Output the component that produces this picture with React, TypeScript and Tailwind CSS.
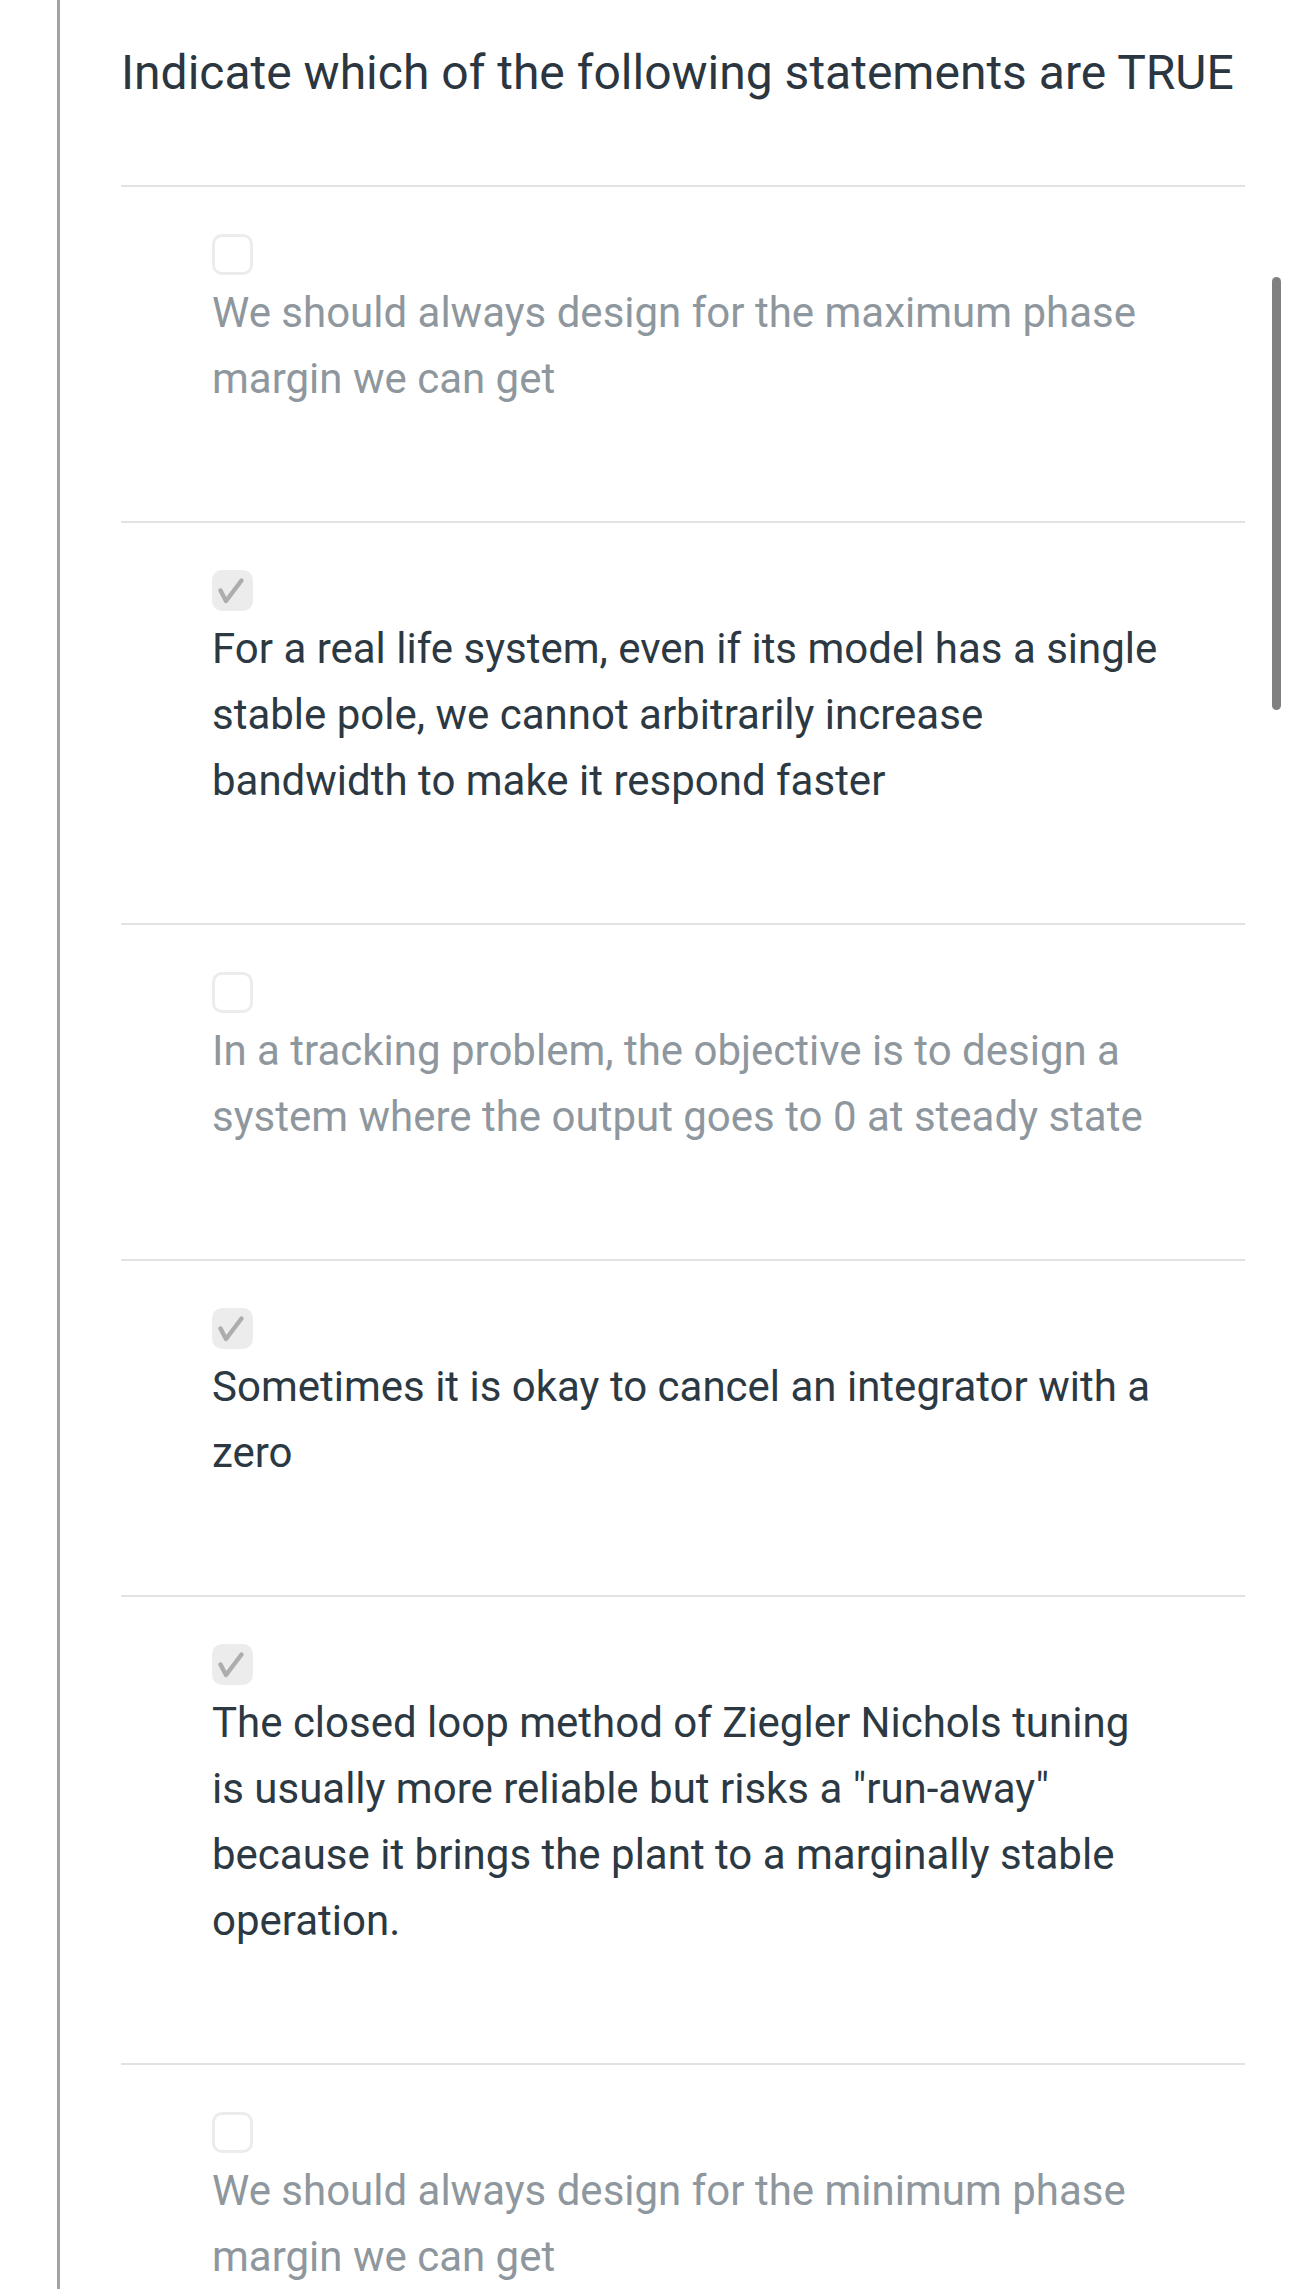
type Item = { text: string; checked: boolean };

const items: Item[] = [
  { text: 'We should always design for the maximum phase margin we can get', checked: false },
  {
    text: 'For a real life system, even if its model has a single stable pole, we cannot arbitrarily increase bandwidth to make it respond faster',
    checked: true,
  },
  {
    text: 'In a tracking problem, the objective is to design a system where the output goes to 0 at steady state',
    checked: false,
  },
  { text: 'Sometimes it is okay to cancel an integrator with a zero', checked: true },
  {
    text: 'The closed loop method of Ziegler Nichols tuning is usually more reliable but risks a "run-away" because it brings the plant to a marginally stable operation.',
    checked: true,
  },
  { text: 'We should always design for the minimum phase margin we can get', checked: false },
];

function Option({ item }: { item: Item }) {
  return (
    <div className="border-t-2 border-[#e2e2e2] pt-[47px] pb-[109px] pl-[91px]">
      {item.checked ? (
        <div className="h-[41px] w-[41px] rounded-[10px] bg-[#ececec]">
          <svg width="41" height="41" viewBox="0 0 41 41" fill="none">
            <path
              d="M8.5 20.5 L14 31 L29.5 10.5"
              stroke="#adadaf"
              strokeWidth="4.4"
              strokeLinecap="round"
              strokeLinejoin="round"
            />
          </svg>
        </div>
      ) : (
        <div className="h-[41px] w-[41px] rounded-[10px] border-[3px] border-[#ececec] bg-white" />
      )}
      <p
        className={
          'mt-[5px] w-[948px] text-[42px] leading-[66px] ' +
          (item.checked ? 'text-[#2c3943]' : 'text-[#8f979e]')
        }
      >
        {item.text}
      </p>
    </div>
  );
}

export default function App() {
  return (
    <div className="relative h-[2289px] w-[1290px] overflow-hidden bg-white font-['Roboto',sans-serif]">
      <div className="ml-[57px] h-full border-l-[3px] border-[#a2a2a2] pl-[61px]">
        <div className="w-[1124px]">
          <h1 className="pt-[45px] pb-[84px] text-[48px] leading-[56px] text-[#2b3640]">
            Indicate which of the following statements are TRUE
          </h1>
          {items.map((item, i) => (
            <Option key={i} item={item} />
          ))}
        </div>
      </div>
      <div className="absolute right-[9px] top-[277px] h-[433px] w-[9px] rounded-full bg-[#808080]" />
    </div>
  );
}
